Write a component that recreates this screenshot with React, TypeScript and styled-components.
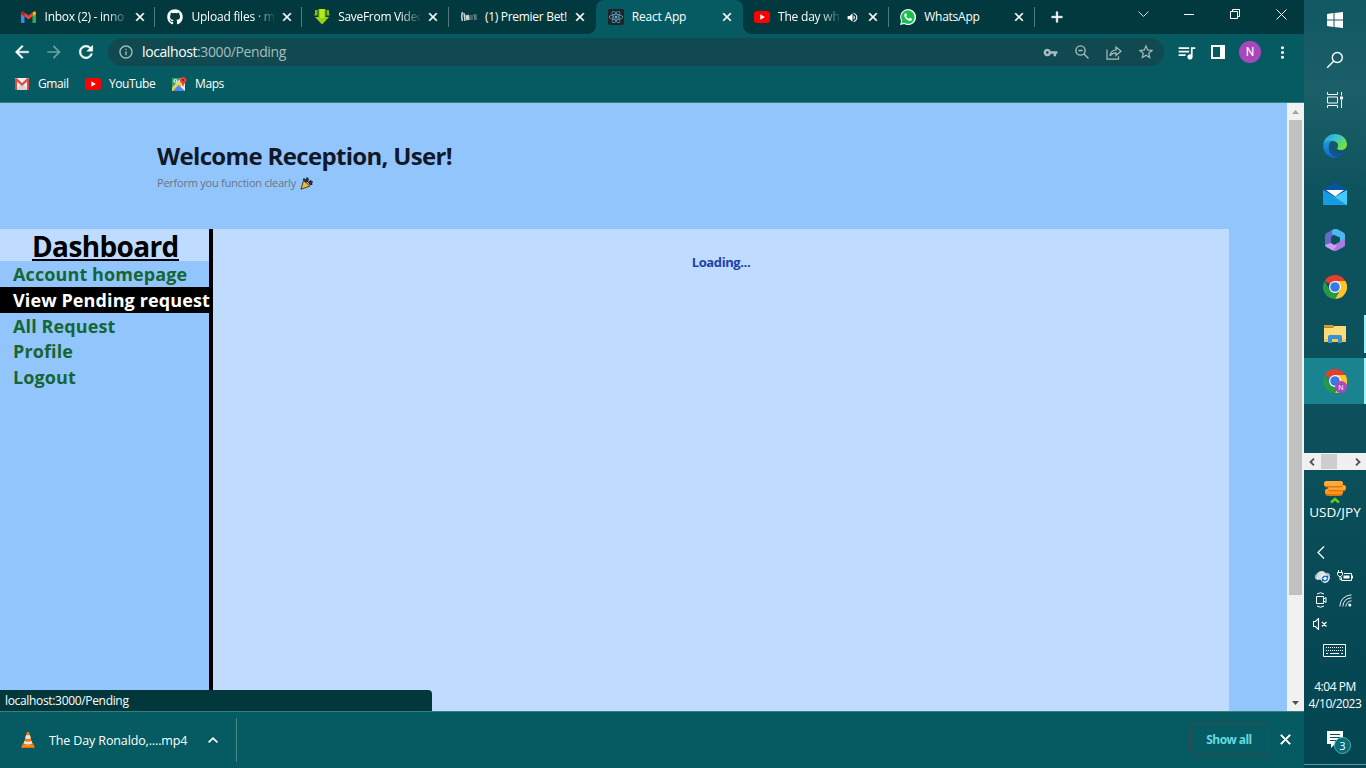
import React from 'react';
import styled, { createGlobalStyle } from 'styled-components';
import {
  MdArrowBack,
  MdArrowForward,
  MdRefresh,
  MdInfoOutline,
  MdVpnKey,
  MdStarBorder,
  MdQueueMusic,
  MdMoreVert,
  MdClose,
  MdAdd,
  MdVolumeUp,
} from 'react-icons/md';
import { FaGithub, FaReact } from 'react-icons/fa';

const ui = `"Open Sans", "Noto Sans", sans-serif`;

const GlobalStyle = createGlobalStyle`
  * { box-sizing: border-box; }
  html, body { margin: 0; padding: 0; overflow: hidden; }
  body { font-family: ${ui}; }
  svg { display: block; flex: none; }
`;

const Screen = styled.div`
  display: grid;
  grid-template-columns: 1304px 62px;
  width: 1366px;
  height: 768px;
  overflow: hidden;
`;

const Browser = styled.div`
  display: flex;
  flex-direction: column;
  height: 768px;
  background: #055b61;
  color: #fff;
`;

/* ---------- tab strip ---------- */

const TabStrip = styled.div`
  display: flex;
  height: 34px;
  padding-left: 8.6px;
  background: #02393e;
`;

const TabBox = styled.div<{ $active?: boolean; $divider?: boolean }>`
  position: relative;
  display: flex;
  align-items: center;
  flex: none;
  width: 146.8px;
  height: 34px;
  padding: 0 8.5px 0 12px;
  background: ${(p) => (p.$active ? '#055b61' : 'transparent')};
  border-radius: 8px 8px 0 0;

  &:nth-child(n + 6) {
    margin-left: -0.6px;
  }

  &::after {
    content: '';
    display: ${(p) => (p.$divider ? 'block' : 'none')};
    position: absolute;
    right: 0;
    top: 7px;
    width: 1px;
    height: 20px;
    background: #54797b;
  }
`;

const Flare = styled.span<{ $side: 'left' | 'right' }>`
  position: absolute;
  bottom: 0;
  ${(p) => p.$side}: -8px;
  width: 8px;
  height: 8px;
  background: radial-gradient(
    circle at ${(p) => (p.$side === 'left' ? '0 0' : '100% 0')},
    transparent 7.5px,
    #055b61 8px
  );
`;

const TabIcon = styled.span`
  display: grid;
  place-items: center;
  flex: none;
  width: 16px;
  height: 16px;
  margin-right: 8px;
`;

const TabTitle = styled.span<{ $fade?: boolean; $track: number }>`
  flex: 1;
  min-width: 0;
  overflow: hidden;
  white-space: nowrap;
  font-size: 12px;
  line-height: 18px;
  letter-spacing: ${(p) => p.$track}px;
  ${(p) =>
    p.$fade &&
    'mask-image: linear-gradient(to right, #000 calc(100% - 22px), transparent 100%);'}
`;

const TabEnd = styled.span`
  display: flex;
  align-items: center;
  gap: 7px;
  margin-left: 4px;
`;

const CloseIcon = styled(MdClose)`
  stroke: currentColor;
  stroke-width: 1px;

  path[fill='none'] {
    stroke: none;
  }
`;

const ReloadIcon = styled(MdRefresh)`
  stroke: currentColor;
  stroke-width: 0.6px;

  path[fill='none'] {
    stroke: none;
  }
`;

const BackIcon = styled(MdArrowBack)`
  stroke: currentColor;
  stroke-width: 0.5px;

  path[fill='none'] {
    stroke: none;
  }
`;

const PlusIcon = styled(MdAdd)`
  stroke: currentColor;
  stroke-width: 0.8px;

  path[fill='none'] {
    stroke: none;
  }
`;

const NewTab = styled.div`
  display: grid;
  place-items: center;
  width: 28px;
  margin-left: 8px;
`;

const WindowControls = styled.div`
  display: flex;
  height: 28px;
  margin-left: auto;
`;

const Control = styled.div`
  display: grid;
  place-items: center;
  width: 46px;
`;

/* ---------- toolbar ---------- */

const Toolbar = styled.div`
  display: flex;
  align-items: center;
  height: 36px;
  padding-left: 6px;
`;

const ToolButton = styled.div<{ $dim?: boolean }>`
  display: grid;
  place-items: center;
  width: 32px;
  height: 28px;
  opacity: ${(p) => (p.$dim ? 0.42 : 1)};
`;

const Omnibox = styled.div`
  display: flex;
  align-items: center;
  width: 1056px;
  height: 28px;
  margin-left: 6px;
  padding: 0 2px 0 10px;
  border-radius: 14px;
  background: #104a50;
  color: #a9bcbe;
`;

const Url = styled.div`
  flex: 1;
  margin-left: 8px;
  font-size: 14px;
  line-height: 20px;
  letter-spacing: -0.4px;
`;

const UrlHost = styled.span`
  color: #fff;
`;

const ToolIcons = styled.div`
  display: flex;
  margin-left: 6px;
`;

const Avatar = styled.span`
  display: grid;
  place-items: center;
  width: 22px;
  height: 22px;
  border-radius: 50%;
  background: #ab47bc;
  font: 12px Roboto, sans-serif;
`;

const Bookmarks = styled.div`
  display: flex;
  align-items: center;
  height: 33px;
  padding: 0 0 5px 14px;
  border-bottom: 1px solid #35807f;
`;

const Bookmark = styled.div<{ $width: number; $track: number }>`
  display: flex;
  align-items: center;
  gap: 8px;
  width: ${(p) => p.$width}px;
  font-size: 12px;
  line-height: 18px;
  letter-spacing: ${(p) => p.$track}px;
  white-space: nowrap;
`;

/* ---------- page ---------- */

const Viewport = styled.div`
  position: relative;
  display: flex;
  flex: none;
  height: 608px;
`;

const Page = styled.main`
  width: 1287px;
  background: #93c5fd;
  overflow: hidden;
`;

const PageHeader = styled.header`
  height: 126px;
  padding: 37px 0 0 157px;
`;

const Title = styled.h1`
  margin: 0;
  color: #111827;
  font-size: 24px;
  font-weight: 700;
  line-height: 32px;
  letter-spacing: -0.67px;
  white-space: nowrap;
`;

const Subtitle = styled.p`
  display: flex;
  align-items: center;
  gap: 4px;
  margin: 3px 0 0;
  color: #6b7280;
  font-size: 11px;
  line-height: 16px;
  letter-spacing: -0.23px;
`;

const PageBody = styled.div`
  display: flex;
  height: 482px;
`;

const Sidebar = styled.nav`
  width: 213px;
  border-right: 4px solid #000;
`;

const SidebarTitle = styled.h2`
  height: 32px;
  margin: 0;
  padding-left: 32px;
  background: #bfdbfe;
  color: #000;
  font-size: 28px;
  font-weight: 700;
  line-height: 34px;
  letter-spacing: -0.63px;
  white-space: nowrap;
`;

const SidebarTitleText = styled.span`
  display: inline-block;
  height: 32px;
  border-bottom: 2px solid #000;
`;

const SidebarItem = styled.div<{ $active?: boolean }>`
  height: 25.75px;
  padding-left: 13px;
  background: ${(p) => (p.$active ? '#000' : 'transparent')};
  color: ${(p) => (p.$active ? '#fff' : '#166534')};
  font-size: 18px;
  font-weight: 700;
  line-height: 26px;
  letter-spacing: 0.11px;
  white-space: nowrap;
`;

const Panel = styled.section`
  width: 1016px;
  padding-top: 23px;
  background: #bfdbfe;
  color: #1e40af;
  font-size: 13px;
  font-weight: 700;
  line-height: 20px;
  letter-spacing: -0.4px;
  text-align: center;
`;

const ScrollBar = styled.div`
  display: flex;
  flex-direction: column;
  align-items: center;
  justify-content: space-between;
  width: 17px;
  background: #f1f1f1;
`;

const ScrollThumb = styled.div`
  width: 13px;
  height: 475px;
  margin-bottom: auto;
  background: #c1c1c1;
`;

const ScrollArrow = styled.div`
  display: grid;
  place-items: center;
  height: 17px;
`;

const StatusBubble = styled.div`
  position: absolute;
  left: 0;
  bottom: 0;
  width: 432px;
  height: 21px;
  padding-left: 5px;
  border-radius: 0 4px 0 0;
  background: #02383c;
  font-size: 12px;
  line-height: 21px;
  letter-spacing: -0.33px;
`;

/* ---------- downloads ---------- */

const DownloadBar = styled.div`
  display: flex;
  align-items: center;
  flex: 1;
  padding: 0 10px 0 20px;
  border-top: 1px solid #35807f;
`;

const DownloadItem = styled.div`
  display: flex;
  align-items: center;
  width: 217px;
  height: 44px;
  border-right: 1px solid #4a8789;
  font-size: 12.5px;
`;

const DownloadName = styled.span`
  width: 140px;
  margin: 0 19px 0 13px;
  white-space: nowrap;
  letter-spacing: -0.13px;
`;

const DownloadActions = styled.div`
  display: flex;
  align-items: center;
  gap: 9px;
  margin: 0 0 2px auto;
`;

const ShowAll = styled.div`
  display: grid;
  place-items: center;
  width: 78px;
  height: 32px;
  border: 1px solid #3c484d;
  border-radius: 4px;
  color: #66d9e0;
  font-size: 12px;
  font-weight: 700;
  letter-spacing: -0.55px;
`;

/* ---------- taskbar ---------- */

const Taskbar = styled.aside`
  display: flex;
  flex-direction: column;
  height: 768px;
  background: linear-gradient(
    #115862 0,
    #1b5f69 90px,
    #165a64 130px,
    #0c525d 200px,
    #0b505b 450px,
    #064954 620px,
    #044652 768px
  );
  color: #fff;
`;

const SystemButton = styled.div`
  display: grid;
  place-items: center;
  height: 40px;
`;

const Apps = styled.div`
  display: grid;
  grid-auto-rows: 46px;
  gap: 1px;
  height: 330px;
  padding-top: 3px;
`;

const AppSlot = styled.div<{ $state?: 'open' | 'active' }>`
  display: grid;
  place-items: center;
  height: ${(p) => (p.$state === 'open' ? 38 : 46)}px;
  align-self: center;
  background: ${(p) => (p.$state === 'active' ? '#1a8390' : 'transparent')};
  border-right: ${(p) => (p.$state ? '2px solid #a4f4f7' : '0')};
  padding-left: ${(p) => (p.$state ? 2 : 0)}px;
`;

const MiniScroll = styled.div`
  display: flex;
  align-items: center;
  justify-content: space-between;
  height: 17px;
  margin-top: 3px;
  background: #f0f0f0;
`;

const MiniThumb = styled.div`
  width: 17px;
  height: 15px;
  margin-right: 12px;
  background: #cdcdcd;
`;

const MiniArrow = styled.div`
  display: grid;
  place-items: center;
  width: 17px;
`;

const Ticker = styled.div`
  display: flex;
  flex-direction: column;
  align-items: center;
  padding-top: 10px;
  height: 70px;
  font-size: 13.5px;
  line-height: 17px;
  letter-spacing: 0.05px;
`;

const Tray = styled.div`
  display: grid;
  grid-template-columns: 24px 24px;
  grid-auto-rows: 24px;
  place-items: center;
  margin-left: 5px;
  height: 95px;
`;

const KeyboardSlot = styled.div`
  display: grid;
  place-items: center;
  height: 30px;
  padding-right: 1px;
`;

const Clock = styled.div`
  margin-top: 13px;
  font-size: 12px;
  line-height: 17px;
  letter-spacing: -0.45px;
  text-align: center;
  white-space: nowrap;
`;

const Notifications = styled.div`
  position: relative;
  display: flex;
  justify-content: center;
  flex: 1;
  padding-top: 19px;
`;

const Badge = styled.span`
  position: absolute;
  left: 30px;
  top: 25px;
  display: grid;
  place-items: center;
  width: 17px;
  height: 17px;
  border: 1px solid #4db0b8;
  border-radius: 50%;
  background: #086c78;
  font-size: 11px;
  line-height: 15px;
`;

const DesktopEdge = styled.div`
  height: 4px;
  border-top: 1px solid #5f949b;
`;

/* ---------- drawings ---------- */

const GmailIcon = () => (
  <svg width="15" height="12" viewBox="0 0 15 12">
    <path d="M0 2v8.5Q0 12 1 12h2.5V4.5z" fill="#4285f4" />
    <path d="M15 2v8.5Q15 12 14 12h-2.500V4.500z" fill="#34a853" />
    <path d="M11.500 1.500V5.500L15 3V2Q14.500-.5 12.500.7z" fill="#fbbc04" />
    <path d="M3.500 5.500v-4L2.500.7Q.5-.5 0 2v1z" fill="#c5221f" />
    <path d="M3.500 1.500 7.500 4.500l4-3v4l-4 3-4-3z" fill="#ea4335" />
  </svg>
);

const GmailOldIcon = () => (
  <svg width="16" height="12" viewBox="0 0 16 12">
    <rect x="1" width="14" height="12" rx="1" fill="#eee" />
    <path d="M2 12 7 6h2l5 6z" fill="#d5d5d5" />
    <path d="M1 12V1.500Q1 0 2.500 0L8 5 13.500 0Q15 0 15 1.500V12h-2V3.500L8 8 3 3.500V12z" fill="#dd4b3e" />
  </svg>
);

const YouTubeIcon = () => (
  <svg width="16" height="12" viewBox="0 0 16 12">
    <rect width="16" height="12" rx="3" fill="#f00" />
    <path d="M6.300 3.300v5.400L10.800 6z" fill="#fff" />
  </svg>
);

const SaveIcon = () => (
  <svg width="16" height="16" viewBox="0 0 16 16">
    <path d="M4.500 0h7v8H15l-7 7.500L1 8h3.500z" fill="#9ad410" />
    <path d="M1 1h2.500v5.500h-3V4.500H1zM15 1h-2.500v5.500h3V4.500H15z" fill="#84bb16" />
    <path d="M6 0h4v9H6z" fill="#b3ec1c" />
  </svg>
);

const BetIcon = () => (
  <svg width="16" height="12" viewBox="0 0 16 12" fill="none">
    <path d="M1.500 1Q0 5 1.500 10M3 2l1 8M5 4l1 5 1-5 1 5" stroke="#ccd6d6" strokeWidth="1.500" />
    <path d="M9 4v5M11 4v5M13 3l1 6M15 3v6" stroke="#7f999b" />
  </svg>
);

const ReactTile = styled.span`
  display: grid;
  place-items: center;
  width: 16px;
  height: 16px;
  border-radius: 2px;
  background: #20232a;
  color: #61b8d4;
`;

const WhatsAppIcon = () => (
  <svg width="16" height="16" viewBox="0 0 16 16">
    <path d="M0 16 1.200 12A8 8 0 1 1 4.200 15z" fill="#fff" />
    <path d="M1.500 14.500 2.300 11.800A6.700 6.700 0 1 1 4.400 13.800z" fill="#12c04a" />
    <path d="M5 4.200h1.200l.8 2-.8 1q1 2 2.700 2.600l1-1.100 2 1v1q-1 1.500-2.600 1.100Q5.500 10.600 4.300 6.900 4 5.200 5 4.200z" fill="#fff" />
  </svg>
);

const MapsIcon = () => (
  <svg width="15" height="14" viewBox="0 0 15 14">
    <rect y="1" width="13" height="13" rx="1" fill="#f1f1f1" />
    <path d="M0 2q0-1 1-1h8L0 11z" fill="#35a566" />
    <path d="M0 14V11L10 2l3 4L3 14z" fill="#f7ca3c" />
    <path d="M6.500 8 13 14H1z" fill="#4a89f3" />
    <path d="m8 6 5 5V6z" fill="#e5e5e5" />
    <circle cx="3.500" cy="4" r="1.500" fill="none" stroke="#fff" />
    <path d="M11 10Q10.700 7 8.500 5A3.200 3.200 0 1 1 13.800 5Q11.400 7 11 10z" fill="#e34133" />
    <circle cx="11.200" cy="3" r="1.100" fill="#8b2119" />
  </svg>
);

const ZoomOutIcon = () => (
  <svg width="14" height="14" viewBox="0 0 14 14" fill="none" stroke="currentColor" strokeWidth="1.400">
    <circle cx="5.500" cy="5.500" r="4.600" />
    <path d="m9 9 4.500 4.500M3.500 5.500h4" />
  </svg>
);

const ShareIcon = () => (
  <svg width="16" height="15" viewBox="0 0 16 15" fill="none" stroke="currentColor" strokeWidth="1.200">
    <path d="M1 4.500v9.700h11.500v-3" />
    <path d="M4 11Q4.300 5.500 10 5V2l5 4.200-5 4.300V7.800Q6 7.800 4 11z" />
  </svg>
);

const PartyIcon = () => (
  <svg width="13" height="13" viewBox="0 0 13 13">
    <path d="M3.500 3.500 1 12.200 10 9z" fill="#fcb827" stroke="#20201c" strokeWidth=".8" />
    <path d="M3 2h2L7 5 5 4.500zM7 .5l1.500 1.500L7.500 5 6 3z" fill="#1b5361" stroke="#18262c" />
    <path d="M8.500 5 11 3.500l1.500 1.500-1 1 .5 1.500L10 7.500z" fill="#6a1f2c" stroke="#171719" />
  </svg>
);

const VlcIcon = () => (
  <svg width="16" height="16" viewBox="0 0 16 16">
    <path d="M3 11h10l2 5H1z" fill="#e96a00" />
    <path d="M7 0h2l3.500 12q-4.500 2-9 0z" fill="#f47a0a" />
    <path d="m6.100 3-1 3.500q3 .9 5.800 0L9.900 3q-2 .6-3.800 0zM4.400 9l-.8 2.600q4.400 2 8.800 0L11.600 9q-3.600 1.500-7.200 0z" fill="#e5e5e5" />
    <path d="M2 14h12" stroke="#ffaa23" />
  </svg>
);

const WindowsIcon = () => (
  <svg width="16" height="16" viewBox="0 0 16 16" fill="#fff">
    <path d="M0 2 6.500 1.100V7.500H0zM7.500 1 16 0v7.500H7.500zM0 8.500h6.500v6.400L0 14zM7.500 8.500H16V16l-8.500-1z" />
  </svg>
);

const SearchIcon = () => (
  <svg width="18" height="18" viewBox="0 0 18 18" fill="none" stroke="#fff" strokeWidth="1.400">
    <circle cx="11.300" cy="6.500" r="5" />
    <path d="M7.800 10 1.200 16.700" />
  </svg>
);

const TaskViewIcon = () => (
  <svg width="16" height="16" viewBox="0 0 16 16" fill="none" stroke="#fff">
    <path d="M.5 0v2.500h10V0M.5 16v-2.500h10V16M.5 5h10v6H.5zM14.500 0v3.500M14.500 8v8" />
    <path d="M13 4.500h3v3h-3z" fill="#fff" stroke="none" />
  </svg>
);

const EdgeIcon = () => (
  <svg width="24" height="24" viewBox="0 0 24 24">
    <defs>
      <linearGradient id="edgeTop" x1="0" y1="0" x2="1" y2=".5">
        <stop offset="0" stopColor="#249fd4" />
        <stop offset=".5" stopColor="#35c1db" />
        <stop offset="1" stopColor="#71e044" />
      </linearGradient>
      <linearGradient id="edgeSide" x1="0" y1="0" x2="0" y2="1">
        <stop offset="0" stopColor="#1b9cdc" />
        <stop offset="1" stopColor="#0969bd" />
      </linearGradient>
    </defs>
    <path d="M.2 10.500C1.500 3.500 6.200 0 12 0c7.500 0 12 5.500 12 10.200 0 4-3 5.900-6.200 5.900-3 0-4.500-1.200-3.300-2.500C16.600 10.700 13.700 7 9.500 7 4.800 7 1.500 9 .2 10.500z" fill="url(#edgeTop)" />
    <path d="M.2 10.500C2 7.200 5.500 6 9 6.600c-3 2-4.200 6-2.500 10C8.300 20.800 11.700 23.500 16 23.300 8 26-.5 20 .2 10.500z" fill="url(#edgeSide)" />
    <path d="M8.200 10.500c-1.800 4.700 3.300 11 13.800 7.300C18.500 24 11.500 24 8.200 20 5.300 16.500 6 12.500 8.200 10.500z" fill="#12529f" />
  </svg>
);

const MailIcon = () => (
  <svg width="24" height="23" viewBox="0 0 24 23">
    <path d="M0 8 12 0l12 8v4H0z" fill="#0a53a3" />
    <path d="m0 8 12 7L24 8v15H0z" fill="#25a5ed" />
    <path d="M24 8v15L12 15z" fill="#43cbf5" />
    <path d="M0 8 22 22.500H0z" fill="#159be4" />
    <path d="M3 8h18l-8.800 6.500z" fill="#f8f8f8" />
  </svg>
);

const OfficeIcon = () => (
  <svg width="20" height="22" viewBox="0 0 20 22">
    <path d="M9 0 1.500 4Q0 5 0 7v9q0 1.200 1.500 2L6 16V8l6-4z" fill="#6769c6" />
    <path d="M9 0h3l6.500 3.500Q20 4.500 20 6v9l-5-3V8.500L7 5V1.500z" fill="#4bb9ef" />
    <path d="M20 10v6q0 1.500-1.500 2L12 21.500q-2 1-4 0L1.500 18l5-1.500L15 12z" fill="#a97be0" />
    <path d="m6 14 6 2.500L8 21.500 1.500 18Q.3 17.500 0 16z" fill="#d09cf0" />
    <path d="M7.500 6.500 14.500 9v4L9 16 6.500 14z" fill="#0c525d" />
  </svg>
);

const ChromeIcon = ({ badge }: { badge?: boolean }) => (
  <svg width="24" height="24" viewBox="0 0 24 24">
    <path d="M12 12 1.600 6A12 12 0 0 1 22.400 6z" fill="#e43e2f" />
    <path d="M12 12V6h10.400A12 12 0 0 1 12 24l5-9z" fill="#fcc629" />
    <path d="M12 12 17.200 15 12 24A12 12 0 0 1 1.600 6l5.200 9z" fill="#279847" />
    <circle cx="12" cy="12" r="6" fill="#fff" />
    <circle cx="12" cy="12" r="4.800" fill="#347be8" />
    {badge && <circle cx="18" cy="18" r="6" fill="#ab47bc" />}
    {badge && (
      <text x="18" y="20.800" fill="#f4ddf7" fontFamily="Roboto, sans-serif" fontSize="7.500" textAnchor="middle">
        N
      </text>
    )}
  </svg>
);

const FolderIcon = () => (
  <svg width="22" height="18" viewBox="0 0 22 18">
    <path d="M0 0h9l1 2H0z" fill="#e59c10" />
    <path d="M0 2.500h9L10.500 1H22v16H0z" fill="#fddb76" />
    <path d="M0 14h22v3H0z" fill="#f5c84b" />
    <path d="M4 18v-6q0-2 2-2h10q2 0 2 2v6h-4v-4H8v4z" fill="#368fd8" />
  </svg>
);

const CoinsIcon = () => (
  <svg width="24" height="24" viewBox="0 0 24 24">
    <rect x="2" y="9" width="18" height="7" rx="3.500" fill="#dc780e" />
    <rect x="2" y="8.500" width="18" height="5.500" rx="2.700" fill="#fb9a22" />
    <rect x="5" y="5" width="18" height="6.500" rx="3.200" fill="#dc780e" />
    <rect x="5" y="5" width="18" height="5" rx="2.500" fill="#ffa52b" />
    <rect x="1" y="1" width="19" height="6.500" rx="3.200" fill="#dc780e" />
    <rect x="1" y="1" width="19" height="5" rx="2.500" fill="#ffa93a" />
    <path d="m8 22.500 4-3.500 4 3.500" fill="none" stroke="#6ac51d" strokeWidth="2.600" />
  </svg>
);

const CloudIcon = () => (
  <svg width="17" height="13" viewBox="0 0 17 13">
    <path d="M4 10a3.500 3.500 0 0 1 0-6.500A5 5 0 0 1 12.500 3 3.500 3.500 0 0 1 15 10z" fill="#aeb9bd" />
    <path d="M5 3.500A5 5 0 0 1 12.500 3L7 9H3Z" fill="#dce2e3" />
    <circle cx="12" cy="8.500" r="4.400" fill="#e9f4fa" />
    <path d="M9.500 8Q12 4.500 14.500 7.500V5.500M14.500 9Q12 12.500 9.500 9.500v2" fill="none" stroke="#1469ba" strokeWidth="1.400" />
  </svg>
);

const BatteryIcon = () => (
  <svg width="16" height="12" viewBox="0 0 16 12" fill="none" stroke="#fff">
    <path d="M4.500 7.500v3H14.500v-7H7M15.500 5.500v3M1.500 0v2.500M4.500 0v2.500M.5 2.500h5v2L4 6.500H2L.5 4.500zM3 6.500v3h1.500" />
    <path d="M6.500 5.500h6v3h-6z" fill="#fff" stroke="none" />
  </svg>
);

const CameraIcon = () => (
  <svg width="13" height="16" viewBox="0 0 13 16" fill="none" stroke="#fff">
    <path d="M1.500 4.500h7v7h-7zM8.500 7l2.500-1.500v5L8.500 9M2 2Q5.500-.5 9 2M2 14Q5.500 16.500 9 14" />
  </svg>
);

const WifiIcon = () => (
  <svg width="13" height="13" viewBox="0 0 13 13" fill="none" stroke="#fff">
    <path d="M.8 12.500Q1.500 2 12.500.8M3.800 12.500Q4.500 4.500 12.500 3.800M6.800 12.500Q7.500 7.500 12.500 6.800" opacity=".9" />
    <circle cx="10.800" cy="11" r="1.500" fill="#fff" stroke="none" />
  </svg>
);

const MuteIcon = () => (
  <svg width="16" height="12" viewBox="0 0 16 12" fill="none" stroke="#fff">
    <path d="M.5 3.500h2l3-3v11l-3-3h-2zM9 4l4.500 4.500M13.500 4 9 8.500" strokeWidth="1.100" />
  </svg>
);

const KeyboardIcon = () => (
  <svg width="23" height="13" viewBox="0 0 23 13" fill="none" stroke="#fff">
    <path d="M.5.500h22v12H.5z" />
    <path d="M3 3.500h17M3 6.500h17" strokeDasharray="1 1" />
    <path d="M3 9.500h2M7 9.500h9M18 9.500h2" />
  </svg>
);

const NoteIcon = () => (
  <svg width="16" height="17" viewBox="0 0 16 17">
    <path d="M0 0h16v13H8l-4 4v-4H0z" fill="#fff" />
    <path d="M3 3.500h10M3 6.500h10M3 9.500h7" stroke="#084d57" />
  </svg>
);

const tabs = [
  { title: 'Inbox (2) - inno', icon: <GmailIcon />, fade: true, divider: true, track: -0.27 },
  { title: 'Upload files · m', icon: <FaGithub size={16} />, fade: true, divider: true, track: -0.2 },
  { title: 'SaveFrom Video', icon: <SaveIcon />, fade: true, divider: true, track: -0.3 },
  { title: '(1) Premier Bet!', icon: <BetIcon />, track: -0.3 },
  { title: 'React App', icon: <ReactTile><FaReact size={14} /></ReactTile>, active: true, track: -0.2 },
  { title: 'The day wh', icon: <YouTubeIcon />, fade: true, divider: true, audio: true, track: -0.2 },
  { title: 'WhatsApp', icon: <WhatsAppIcon />, divider: true, track: -0.25 },
];

const menu = [
  { label: 'Account homepage' },
  { label: 'View Pending request', active: true },
  { label: 'All Request' },
  { label: 'Profile' },
  { label: 'Logout' },
];

export default function App() {
  return (
    <Screen>
      <GlobalStyle />
      <Browser>
        <TabStrip>
          {tabs.map((t) => (
            <TabBox key={t.title} $active={t.active} $divider={t.divider}>
              {t.active && <Flare $side="left" />}
              {t.active && <Flare $side="right" />}
              <TabIcon>{t.icon}</TabIcon>
              <TabTitle $fade={t.fade} $track={t.track}>{t.title}</TabTitle>
              <TabEnd>
                {t.audio && <MdVolumeUp size={13} />}
                <CloseIcon size={14} />
              </TabEnd>
            </TabBox>
          ))}
          <NewTab><PlusIcon size={18} /></NewTab>
          <WindowControls>
            <Control>
              <svg width="11" height="7" viewBox="0 0 11 7" fill="none" stroke="#d3dddd"><path d="m.5.500 5 5 5-5" /></svg>
            </Control>
            <Control>
              <svg width="10" height="1"><path d="M0 .5h10" stroke="#fff" /></svg>
            </Control>
            <Control>
              <svg width="10" height="10" viewBox="0 0 10 10" fill="none" stroke="#fff"><path d="M.5 2.500h7v7h-7zM2.500 2.500v-2h7v7h-2" /></svg>
            </Control>
            <Control>
              <svg width="11" height="11" viewBox="0 0 11 11" stroke="#fff"><path d="m.5.500 10 10M10.500.500l-10 10" /></svg>
            </Control>
          </WindowControls>
        </TabStrip>

        <Toolbar>
          <ToolButton><BackIcon size={20} /></ToolButton>
          <ToolButton $dim><MdArrowForward size={20} /></ToolButton>
          <ToolButton><ReloadIcon size={20} /></ToolButton>
          <Omnibox>
            <MdInfoOutline size={16} />
            <Url><UrlHost>localhost</UrlHost>:3000/Pending</Url>
            <ToolButton><MdVpnKey size={15} /></ToolButton>
            <ToolButton><ZoomOutIcon /></ToolButton>
            <ToolButton><ShareIcon /></ToolButton>
            <ToolButton><MdStarBorder size={18} /></ToolButton>
          </Omnibox>
          <ToolIcons>
            <ToolButton><MdQueueMusic size={21} /></ToolButton>
            <ToolButton>
              <svg width="14" height="14" viewBox="0 0 14 14"><path fillRule="evenodd" d="M0 0h14v14H0zM2 2v10h7V2z" fill="#fff" /></svg>
            </ToolButton>
            <ToolButton><Avatar>N</Avatar></ToolButton>
            <ToolButton><MdMoreVert size={19} /></ToolButton>
          </ToolIcons>
        </Toolbar>

        <Bookmarks>
          <Bookmark $width={71} $track={-0.4}><GmailOldIcon />Gmail</Bookmark>
          <Bookmark $width={87} $track={-0.45}><YouTubeIcon />YouTube</Bookmark>
          <Bookmark $width={60} $track={-0.4}><MapsIcon />Maps</Bookmark>
        </Bookmarks>

        <Viewport>
          <Page>
            <PageHeader>
              <Title>Welcome Reception, User!</Title>
              <Subtitle>Perform you function clearly <PartyIcon /></Subtitle>
            </PageHeader>
            <PageBody>
              <Sidebar>
                <SidebarTitle><SidebarTitleText>Dashboard</SidebarTitleText></SidebarTitle>
                {menu.map((m) => (
                  <SidebarItem key={m.label} $active={m.active}>{m.label}</SidebarItem>
                ))}
              </Sidebar>
              <Panel>Loading...</Panel>
            </PageBody>
          </Page>
          <ScrollBar>
            <ScrollArrow><svg width="7" height="4"><path d="M0 4 3.500 0 7 4z" fill="#a3a3a3" /></svg></ScrollArrow>
            <ScrollThumb />
            <ScrollArrow><svg width="7" height="4"><path d="M0 0h7L3.500 4z" fill="#505050" /></svg></ScrollArrow>
          </ScrollBar>
          <StatusBubble>localhost:3000/Pending</StatusBubble>
        </Viewport>

        <DownloadBar>
          <DownloadItem>
            <VlcIcon />
            <DownloadName>The Day Ronaldo,....mp4</DownloadName>
            <svg width="10" height="6" viewBox="0 0 10 6" fill="none" stroke="#fff" strokeWidth="1.600"><path d="m.6 5.400 4.400-4.300 4.400 4.300" /></svg>
          </DownloadItem>
          <DownloadActions>
            <ShowAll>Show all</ShowAll>
            <CloseIcon size={17} />
          </DownloadActions>
        </DownloadBar>
      </Browser>

      <Taskbar>
        <SystemButton><WindowsIcon /></SystemButton>
        <SystemButton><SearchIcon /></SystemButton>
        <SystemButton><TaskViewIcon /></SystemButton>
        <Apps>
          <AppSlot><EdgeIcon /></AppSlot>
          <AppSlot><MailIcon /></AppSlot>
          <AppSlot><OfficeIcon /></AppSlot>
          <AppSlot><ChromeIcon /></AppSlot>
          <AppSlot $state="open"><FolderIcon /></AppSlot>
          <AppSlot $state="active"><ChromeIcon badge /></AppSlot>
        </Apps>
        <MiniScroll>
          <MiniArrow><svg width="6" height="8" viewBox="0 0 6 8" fill="none" stroke="#505050" strokeWidth="1.800"><path d="M5 .7 1.500 4 5 7.300" /></svg></MiniArrow>
          <MiniThumb />
          <MiniArrow><svg width="6" height="8" viewBox="0 0 6 8" fill="none" stroke="#505050" strokeWidth="1.800"><path d="M1 .7 4.500 4 1 7.300" /></svg></MiniArrow>
        </MiniScroll>
        <Ticker>
          <CoinsIcon />
          USD/JPY
        </Ticker>
        <Tray>
          <svg width="8" height="13" viewBox="0 0 8 13" fill="none" stroke="#fff" strokeWidth="1.200"><path d="m7 .5-6 6 6 6" /></svg>
          <span />
          <CloudIcon />
          <BatteryIcon />
          <CameraIcon />
          <WifiIcon />
          <MuteIcon />
        </Tray>
        <KeyboardSlot><KeyboardIcon /></KeyboardSlot>
        <Clock>4:04 PM<br />4/10/2023</Clock>
        <Notifications>
          <NoteIcon />
          <Badge>3</Badge>
        </Notifications>
        <DesktopEdge />
      </Taskbar>
    </Screen>
  );
}
